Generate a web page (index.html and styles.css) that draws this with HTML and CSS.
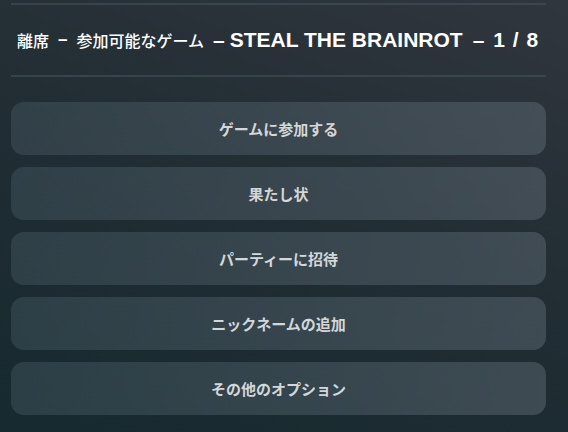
FILE: index.html
```html
<!DOCTYPE html>
<html lang="ja">
<head>
<meta charset="utf-8">
<link rel="stylesheet" href="styles.css">
</head>
<body>
<div class="panel">
  <div class="rule"></div>
  <div class="header">
    <span class="jp">離席</span>
    <span class="dash small">–</span>
    <span class="jp">参加可能なゲーム</span>
    <span class="dash">–</span>
    <span class="main">STEAL THE BRAINROT</span>
    <span class="dash last">–</span>
    <span class="main count">1 / 8</span>
  </div>
  <div class="rule"></div>
  <div class="buttons">
    <div class="btn">ゲームに参加する</div>
    <div class="btn">果たし状</div>
    <div class="btn">パーティーに招待</div>
    <div class="btn">ニックネームの追加</div>
    <div class="btn">その他のオプション</div>
  </div>
</div>
</body>
</html>
```
FILE: styles.css
```css
html, body {
  margin: 0;
  padding: 0;
}
body {
  width: 568px;
  height: 432px;
  overflow: hidden;
  background: linear-gradient(200deg, #30363e 0%, #222d34 45%, #162a2f 100%);
  font-family: "Liberation Sans", "Noto Sans CJK JP", sans-serif;
}
.panel {
  padding: 3px 22px 0 11px;
  display: flex;
  flex-direction: column;
}
.rule {
  height: 2px;
  background: rgba(70, 85, 95, 0.55);
}
.header {
  height: 70px;
  display: flex;
  align-items: center;
  padding-left: 6px;
  color: #ffffff;
  white-space: nowrap;
}
.jp {
  font-family: "Noto Sans CJK JP", sans-serif;
  font-size: 16px;
  font-weight: 500;
}
.dash {
  font-family: "Liberation Sans", sans-serif;
  font-size: 21px;
  font-weight: bold;
  margin: 0 5px 0 9px;
}
.dash.small {
  font-size: 17px;
  margin: 0 9px 0 9px;
}
.dash.last {
  margin: 0 9px 0 10px;
}
.main {
  font-family: "Liberation Sans", sans-serif;
  font-size: 21px;
  font-weight: bold;
}
.count {
  word-spacing: 2px;
}
.buttons {
  margin-top: 25px;
  display: flex;
  flex-direction: column;
  gap: 12px;
}
.btn {
  height: 53px;
  border-radius: 13px;
  background: linear-gradient(100deg, rgba(80, 100, 110, 0.35) 0%, rgba(100, 112, 122, 0.45) 100%);
  display: flex;
  align-items: center;
  justify-content: center;
  font-family: "Noto Sans CJK JP", sans-serif;
  font-size: 15px;
  font-weight: bold;
  color: #d3d7d9;
}
```
